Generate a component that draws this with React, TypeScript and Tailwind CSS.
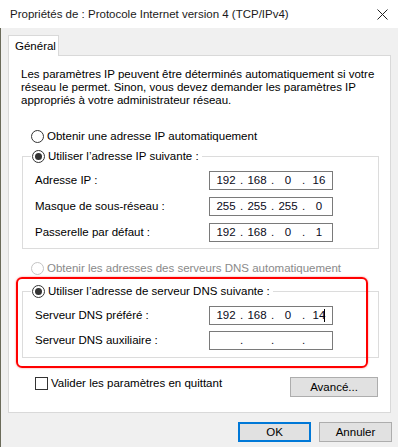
import React from 'react';

const FONT = "font-['Liberation_Sans',Arial,sans-serif]";

function Radio({ checked = false, disabled = false }: { checked?: boolean; disabled?: boolean }) {
  return (
    <span
      className={`w-[13px] h-[13px] rounded-full border bg-white flex items-center justify-center shrink-0 ${
        disabled ? 'border-[#c4c4c4]' : 'border-[#333333]'
      }`}
    >
      {checked && <span className="w-[7px] h-[7px] rounded-full bg-[#333333]" />}
    </span>
  );
}

function IpField({ parts, caret = false }: { parts: string[]; caret?: boolean }) {
  return (
    <div className="w-[124px] h-[19px] border border-[#7a7a7a] bg-white flex items-center pl-[4px] text-[#0a0a20]">
      {parts.map((p, i) => (
        <React.Fragment key={i}>
          <span className="w-[24px] text-center relative">
            {p}
            {caret && i === 3 && (
              <span className="absolute left-[17px] top-[1px] w-px h-[13px] bg-black" />
            )}
          </span>
          {i < 3 && <span className="w-[7px] text-center">.</span>}
        </React.Fragment>
      ))}
    </div>
  );
}

function FieldRow({ label, parts, caret }: { label: string; parts: string[]; caret?: boolean }) {
  return (
    <div className="flex items-center h-[19px]">
      <span className="w-[186px] pl-[12px]">{label}</span>
      <IpField parts={parts} caret={caret} />
    </div>
  );
}

export default function App() {
  return (
    <div className={`${FONT} text-[11.5px] leading-[15px] text-black w-[398px] h-[447px] bg-[#f0f0f0] flex flex-col relative overflow-hidden`}>
      {/* Title bar */}
      <div className="h-[28px] bg-white flex items-center justify-between pl-[10px] pr-[10px] shrink-0">
        <span className="text-[11.5px] text-[#1a1a1a]">Propriétés de : Protocole Internet version 4 (TCP/IPv4)</span>
        <svg width="11" height="11" viewBox="0 0 11 11" fill="none" stroke="#222" strokeWidth="1">
          <path d="M0.5 0.5l10 10M10.5 0.5l-10 10" />
        </svg>
      </div>

      {/* Body */}
      <div className="flex-1 border-l border-[#6b6b5a] pl-[7px]">
        {/* Tab */}
        <div className="mt-[7px] w-[51px] h-[21px] bg-white border border-[#d9d9d9] border-b-0 relative z-10 -mb-px pl-[6px] leading-[20px]">
          Général
        </div>

        {/* Panel */}
        <div className="w-[383px] h-[358px] bg-white border border-[#d9d9d9] pl-[12px] pr-[12px] pt-[12px]">
          <p className="leading-[13px] whitespace-nowrap">
            Les paramètres IP peuvent être déterminés automatiquement si votre
            <br />
            réseau le permet. Sinon, vous devez demander les paramètres IP
            <br />
            appropriés à votre administrateur réseau.
          </p>

          <div className="mt-[22px] ml-[10px] flex items-center gap-[3px] h-[15px]">
            <Radio />
            <span>Obtenir une adresse IP automatiquement</span>
          </div>

          <fieldset className="mt-[5px] ml-[1px] w-[357px] border border-[#dcdcdc] px-0 pb-[6px]">
            <legend className="ml-[8px] pl-px pr-[3px] flex items-center gap-[3px] h-[15px]">
              <Radio checked />
              <span>Utiliser l’adresse IP suivante :</span>
            </legend>
            <div className="pt-[7px] flex flex-col gap-[7px]">
              <FieldRow label="Adresse IP :" parts={['192', '168', '0', '16']} />
              <FieldRow label="Masque de sous-réseau :" parts={['255', '255', '255', '0']} />
              <FieldRow label="Passerelle par défaut :" parts={['192', '168', '0', '1']} />
            </div>
          </fieldset>

          <div className="mt-[12px] ml-[10px] flex items-center gap-[3px] h-[15px] text-[#8a8a8a]">
            <Radio disabled />
            <span>Obtenir les adresses des serveurs DNS automatiquement</span>
          </div>

          <fieldset className="mt-[8px] ml-[1px] w-[357px] border border-[#dcdcdc] px-0 pb-[7px]">
            <legend className="ml-[8px] pl-px pr-[3px] flex items-center gap-[3px] h-[15px]">
              <Radio checked />
              <span>Utiliser l’adresse de serveur DNS suivante :</span>
            </legend>
            <div className="pt-[7px] flex flex-col gap-[6px]">
              <FieldRow label="Serveur DNS préféré :" parts={['192', '168', '0', '14']} caret />
              <FieldRow label="Serveur DNS auxiliaire :" parts={['', '', '', '']} />
            </div>
          </fieldset>

          <div className="mt-[19px] flex items-start justify-between">
            <div className="ml-[14px] flex items-center gap-[3px] h-[13px]">
              <span className="w-[13px] h-[13px] border border-[#333333] bg-white shrink-0" />
              <span>Valider les paramètres en quittant</span>
            </div>
            <button className="w-[88px] h-[20px] bg-[#e1e1e1] border border-[#adadad] flex items-center justify-center">
              Avancé...
            </button>
          </div>
        </div>

        {/* Footer buttons */}
        <div className="mt-[9px] pr-[6px] flex justify-end gap-[8px]">
          <button className="w-[73px] h-[20px] bg-[#e1e1e1] border-2 border-[#0078d7] flex items-center justify-center">
            OK
          </button>
          <button className="w-[73px] h-[20px] bg-[#e1e1e1] border border-[#adadad] flex items-center justify-center">
            Annuler
          </button>
        </div>
      </div>

      {/* Red annotation around the DNS group */}
      <div className="absolute left-[16px] top-[277px] w-[352px] h-[91px] border-2 border-[#ff0000] rounded-[6px] shadow-[0_0_2px_rgba(255,0,0,0.5)] pointer-events-none" />
    </div>
  );
}
